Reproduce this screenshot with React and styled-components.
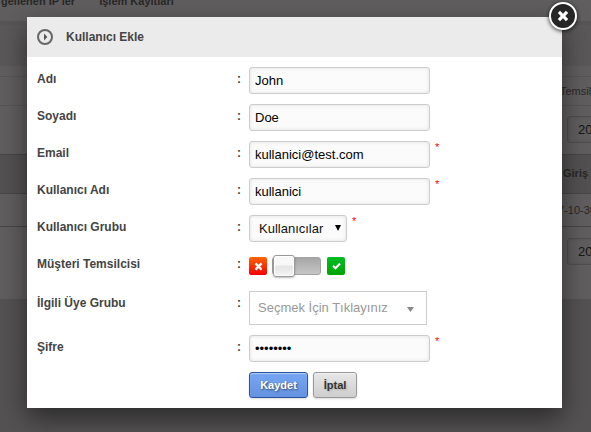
import React from "react";
import styled, { createGlobalStyle } from "styled-components";

const GlobalStyle = createGlobalStyle`
  * { box-sizing: border-box; }
  body {
    margin: 0;
    overflow: hidden;
    background: #545252;
    font-family: "Liberation Sans", Arial, sans-serif;
    font-size: 12px;
    color: #444;
  }
`;

const Screen = styled.div`
  position: relative;
  width: 591px;
  height: 432px;
  overflow: hidden;
`;

const Page = styled.div`
  display: flex;
  flex-direction: column;
  height: 100%;
  color: #292828;
  font-size: 11px;
`;

const Band = styled.div`
  display: flex;
  flex: none;
  align-items: center;
  height: ${(p) => p.$h}px;
  padding-left: ${(p) => p.$indent || 0}px;
  padding-bottom: ${(p) => p.$lift || 0}px;
  background: ${(p) => p.$bg || "#605e5e"};
  border-bottom: ${(p) => (p.$line ? `1px solid ${p.$line}` : "0")};
  font-weight: ${(p) => (p.$bold ? "bold" : "normal")};
  white-space: nowrap;
  overflow: hidden;
`;

const Menu = styled(Band)`
  align-items: flex-start;
  gap: 24px;
  line-height: 12px;
  border-bottom: 4px solid #575555;

  span { margin-top: -5px; }
`;

const DateField = styled.div`
  flex: none;
  width: 80px;
  height: 27px;
  padding-left: 10px;
  border: 1px solid #504e4e;
  border-radius: 3px;
  box-shadow: inset 0 0 3px rgba(0, 0, 0, 0.15);
  font-size: 13px;
  line-height: 26px;
  color: #151515;
`;

const Dialog = styled.section`
  position: absolute;
  left: 27px;
  top: 17px;
  width: 535px;
  height: 391px;
  background: #fff;
  box-shadow: 0 10px 25px rgba(0, 0, 0, 0.5);
`;

const Header = styled.header`
  display: flex;
  align-items: center;
  gap: 13px;
  height: 40px;
  padding-left: 10px;
  background: #ebebeb;
  font-weight: bold;

  svg { display: block; }
`;

const CloseButton = styled.button`
  position: absolute;
  top: -15px;
  right: -15px;
  width: 28px;
  height: 28px;
  padding: 0;
  display: grid;
  place-items: center;
  border: 2px solid #fff;
  border-radius: 50%;
  background: #262626;
  box-shadow: 0 1px 4px rgba(0, 0, 0, 0.8);
`;

const Form = styled.div`
  display: flex;
  flex-direction: column;
  gap: 10px;
  padding: 10px;
`;

const Row = styled.div`
  display: grid;
  grid-template-columns: 200px 12px 1fr;
  height: ${(p) => p.$h || 27}px;
`;

const Label = styled.label`
  font-weight: bold;
  line-height: 24px;
`;

const Control = styled.div`
  display: flex;
  align-items: flex-start;
  gap: 5px;
`;

const Input = styled.input`
  width: 181px;
  height: 27px;
  padding: 0 5px;
  border: 1px solid #ccc;
  border-radius: 3px;
  outline: 0;
  background: #fbfbfb;
  box-shadow: inset 0 0 4px rgba(0, 0, 0, 0.1);
  font: 13px "Liberation Sans", Arial, sans-serif;
  color: #000;
`;

const Required = styled.span`
  font-size: 11px;
  line-height: 13px;
  color: #f00;
`;

const Select = styled.div`
  display: flex;
  justify-content: space-between;
  align-items: center;
  width: 98px;
  height: 27px;
  padding: 0 5px 0 9px;
  border: 1px solid #ccc;
  border-radius: 3px;
  background: #fbfbfb;
  box-shadow: inset 0 0 4px rgba(0, 0, 0, 0.1);
  font-size: 13px;
  color: #111;

  svg { margin-bottom: 2px; }
`;

const GroupPicker = styled.div`
  display: flex;
  align-items: center;
  justify-content: space-between;
  width: 178px;
  height: 34px;
  padding: 0 12px 2px 8px;
  border: 1px solid #ccc;
  font-size: 13px;
  color: #999;

  svg { margin-top: 5px; }
`;

const SwitchGroup = styled(Control)`
  align-items: center;
  height: 28px;
`;

const StateBadge = styled.span`
  display: grid;
  place-items: center;
  width: 18px;
  height: 18px;
  border-radius: 2px;
  background: ${(p) =>
    p.$on
      ? "linear-gradient(#00bd27, #00a400)"
      : "linear-gradient(#ff6500, #f50000)"};
`;

const Track = styled.span`
  display: flex;
  align-items: center;
  width: 49px;
  height: 18px;
  margin: 0 1px 0 0;
  border: 1px solid #a2a2a2;
  border-radius: 3px;
  background: linear-gradient(#a6a6a6, #c6c6c6);
`;

const Knob = styled.span`
  flex: none;
  width: 22px;
  height: 22px;
  border: 1px solid #999;
  border-radius: 3px;
  background: linear-gradient(#f8f8f8 0 46%, #e4e4e4 50%, #f4f4f4);
  box-shadow: 0 1px 2px rgba(0, 0, 0, 0.25), inset 0 0 0 1px #fff;
`;

const Actions = styled.div`
  display: flex;
  gap: 5px;
  padding-left: 212px;
`;

const Button = styled.button`
  width: ${(p) => p.$w}px;
  height: 26px;
  padding: 0;
  border: 1px solid ${(p) => (p.$primary ? "#2c549e" : "#999")};
  border-radius: 3px;
  background: ${(p) =>
    p.$primary
      ? "linear-gradient(#76a6f2, #6592e0)"
      : "linear-gradient(#e7e7e7, #cecece)"};
  box-shadow: inset 0 1px 1px rgba(255, 255, 255, 0.45),
    0 1px 2px rgba(0, 0, 0, 0.15);
  font: bold 11px "Liberation Sans", Arial, sans-serif;
  color: ${(p) => (p.$primary ? "#fff" : "#333")};
  text-shadow: ${(p) =>
    p.$primary ? "1px 1px 2px rgba(0,0,0,.5)" : "1px 1px 2px rgba(0,0,0,.2)"};
`;

function Cross({ size, width }) {
  return (
    <svg width={size} height={size} viewBox="0 0 10 10">
      <path d="M1.6 1.6 8.4 8.4M8.4 1.6 1.6 8.4" stroke="#fff" strokeWidth={width} />
    </svg>
  );
}

function Arrow({ width, height, color }) {
  return (
    <svg width={width} height={height} viewBox="0 0 6 6" preserveAspectRatio="none">
      <path d="M0 0h6L3 6z" fill={color} />
    </svg>
  );
}

function Field({ label, height, required, children }) {
  return (
    <Row $h={height}>
      <Label>{label}</Label>
      <Label as="span">:</Label>
      <Control>
        {children}
        {required && <Required>*</Required>}
      </Control>
    </Row>
  );
}

export default function App() {
  return (
    <Screen>
      <GlobalStyle />
      <Page>
        <Menu $h={25} $indent={1} $bold>
          <span>gellenen IP'ler</span>
          <span>İşlem Kayıtları</span>
        </Menu>
        <Band $h={41} $bg="#5a5858" />
        <Band $h={11} $line="#575555" />
        <Band $h={29} $line="#575555" $indent={560}>Temsilci</Band>
        <Band $h={49} $line="#484646" $indent={567} $lift={2}>
          <DateField>20</DateField>
        </Band>
        <Band $h={39} $bg="#535151" $line="#484646" $indent={563} $lift={2} $bold>Giriş</Band>
        <Band $h={33} $line="#484646" $indent={558}>7-10-30</Band>
        <Band $h={72} $indent={567} $lift={24}>
          <DateField>20</DateField>
        </Band>
      </Page>

      <Dialog>
        <Header>
          <svg width="16" height="16" viewBox="0 0 16 16">
            <circle cx="8" cy="8" r="7" fill="none" stroke="#666" strokeWidth="2" />
            <path d="M7 4.5v7l3.3-3.5z" fill="#555" />
          </svg>
          <span>Kullanıcı Ekle</span>
        </Header>
        <Form>
          <Field label="Adı"><Input defaultValue="John" /></Field>
          <Field label="Soyadı"><Input defaultValue="Doe" /></Field>
          <Field label="Email" required><Input defaultValue="kullanici@test.com" /></Field>
          <Field label="Kullanıcı Adı" required><Input defaultValue="kullanici" /></Field>
          <Field label="Kullanıcı Grubu" required>
            <Select>
              <span>Kullanıcılar</span>
              <Arrow width={6} height={6} color="#000" />
            </Select>
          </Field>
          <Field label="Müşteri Temsilcisi" height={29}>
            <SwitchGroup>
              <StateBadge><Cross size={9} width={2.6} /></StateBadge>
              <Track><Knob /></Track>
              <StateBadge $on>
                <svg width="9" height="8" viewBox="0 0 9 8">
                  <path d="M1 3.8 3.5 6.2 8 1.5" fill="none" stroke="#fff" strokeWidth="2.2" />
                </svg>
              </StateBadge>
            </SwitchGroup>
          </Field>
          <Field label="İlgili Üye Grubu" height={34}>
            <GroupPicker>
              <span>Seçmek İçin Tıklayınız</span>
              <Arrow width={7} height={5} color="#888" />
            </GroupPicker>
          </Field>
          <Field label="Şifre" required><Input type="password" defaultValue="12345678" /></Field>
          <Actions>
            <Button $primary $w={59}>Kaydet</Button>
            <Button $w={44}>İptal</Button>
          </Actions>
        </Form>
        <CloseButton aria-label="Kapat"><Cross size={12} width={2.7} /></CloseButton>
      </Dialog>
    </Screen>
  );
}
